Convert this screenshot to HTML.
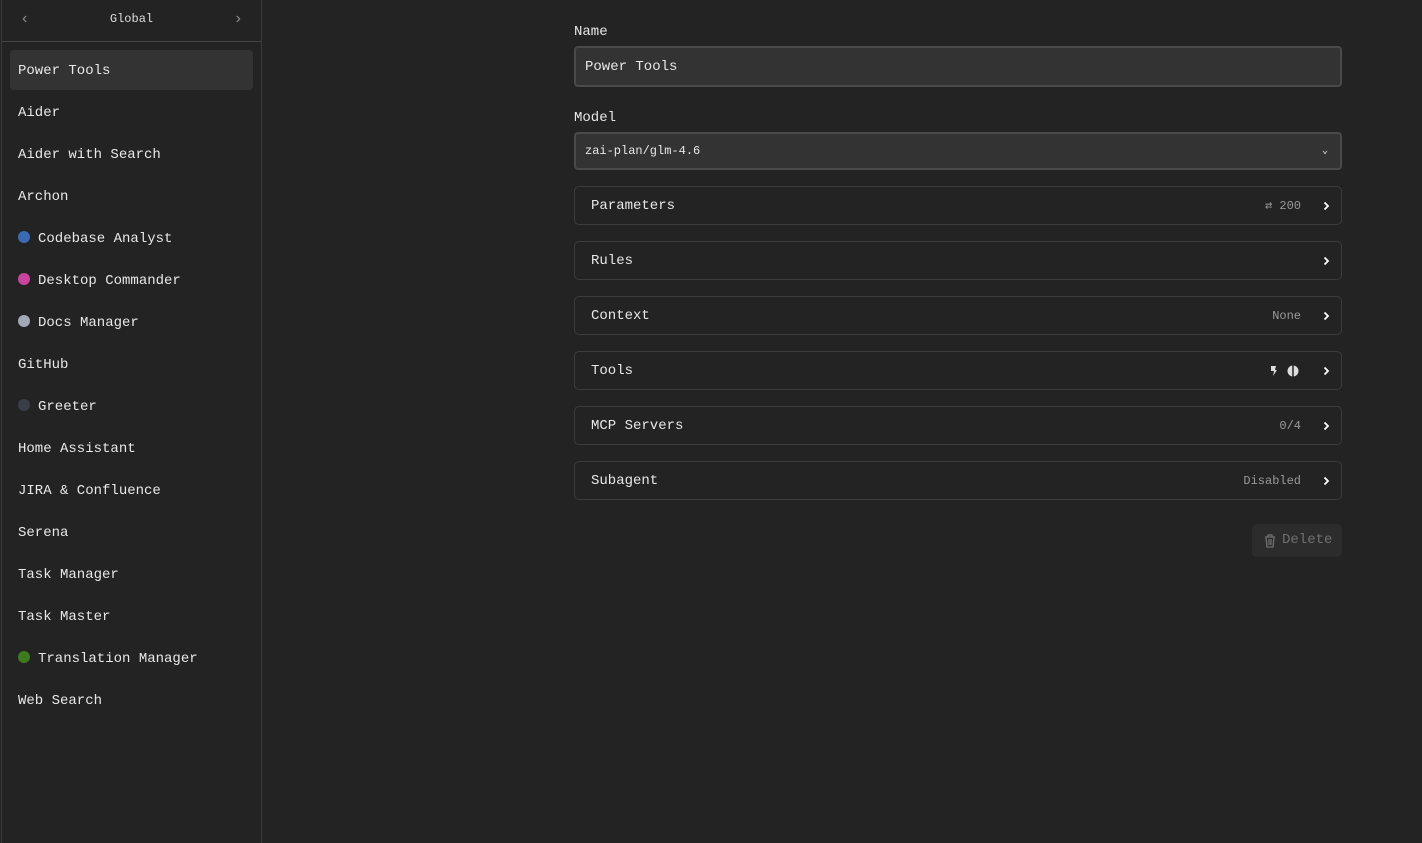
<!DOCTYPE html>
<html><head><style>
*{box-sizing:border-box;margin:0;padding:0}
body{width:1422px;height:843px;background:#232323;color:#e8e8e8;font-family:"Liberation Mono",monospace;font-size:14px;position:relative;overflow:hidden}
.side{position:absolute;left:1px;top:0;width:261px;height:843px;border-left:1px solid #3a3a3a;border-right:1px solid #3a3a3a;background:#232323}
.hdr{height:42px;border-bottom:1px solid #444;position:relative;font-size:12px;text-align:center;line-height:38px;color:#ddd}
.hdr .l,.hdr .r{position:absolute;top:0;color:#888;font-size:16px}
.item{position:absolute;left:8px;width:243px;height:40px;line-height:42px;padding-left:8px;border-radius:4px;white-space:pre}
.item.sel{background:#333}
.dot{display:inline-block;width:12px;height:12px;border-radius:50%;vertical-align:-1px;margin-right:8px}
.lbl{position:absolute;left:574px;font-size:14px}
.inp{position:absolute;left:574px;width:768px;background:#333;border:2px solid #444;border-radius:4px;padding-left:9px;white-space:pre}
.row{position:absolute;left:574px;width:768px;height:39px;border:1px solid #3c3c3c;border-radius:5px;line-height:39px;padding-left:16px}
.row .v{position:absolute;right:40px;top:0;font-size:12px;color:#9a9a9a}
.row svg.c{position:absolute;right:10px;top:13px}
.del{position:absolute;left:1252px;top:524px;width:90px;height:33px;background:#2c2c2c;border-radius:5px;color:#6f6f6f;line-height:33px;padding-left:30px}
</style></head><body>
<div class="side">
<div class="hdr"><span class="l" style="left:18px">‹</span>Global<span class="r" style="right:18px">›</span></div>
<div class="item sel" style="top:50px">Power Tools</div>
<div class="item" style="top:92px">Aider</div>
<div class="item" style="top:134px">Aider with Search</div>
<div class="item" style="top:176px">Archon</div>
<div class="item" style="top:218px"><span class="dot" style="background:#3a6ab4"></span>Codebase Analyst</div>
<div class="item" style="top:260px"><span class="dot" style="background:#c9449c"></span>Desktop Commander</div>
<div class="item" style="top:302px"><span class="dot" style="background:#a3a8b6"></span>Docs Manager</div>
<div class="item" style="top:344px">GitHub</div>
<div class="item" style="top:386px"><span class="dot" style="background:#3a3e47"></span>Greeter</div>
<div class="item" style="top:428px">Home Assistant</div>
<div class="item" style="top:470px">JIRA &amp; Confluence</div>
<div class="item" style="top:512px">Serena</div>
<div class="item" style="top:554px">Task Manager</div>
<div class="item" style="top:596px">Task Master</div>
<div class="item" style="top:638px"><span class="dot" style="background:#3f7a1c"></span>Translation Manager</div>
<div class="item" style="top:680px">Web Search</div>
</div>
<div class="lbl" style="top:24px">Name</div>
<div class="inp" style="top:46px;height:41px;line-height:39px;border-color:#4a4a4a">Power Tools</div>
<div class="lbl" style="top:110px">Model</div>
<div class="inp" style="top:132px;height:38px;line-height:35px;font-size:12px;border-color:#4a4a4a">zai-plan/glm-4.6<span style="position:absolute;right:12px;font-size:10px">⌄</span></div>
<div class="row" style="top:186px">Parameters<span class="v">⇄ 200</span><svg class="c" width="10" height="12" viewBox="0 0 10 12"><path d="M3.5 2.5l3.5 3.5-3.5 3.5" stroke="#fff" stroke-width="1.8" fill="none"/></svg></div>
<div class="row" style="top:241px">Rules<svg class="c" width="10" height="12" viewBox="0 0 10 12"><path d="M3.5 2.5l3.5 3.5-3.5 3.5" stroke="#fff" stroke-width="1.8" fill="none"/></svg></div>
<div class="row" style="top:296px">Context<span class="v">None</span><svg class="c" width="10" height="12" viewBox="0 0 10 12"><path d="M3.5 2.5l3.5 3.5-3.5 3.5" stroke="#fff" stroke-width="1.8" fill="none"/></svg></div>
<div class="row" style="top:351px">Tools<span class="v" style="top:13px;line-height:0"><svg width="34" height="12" viewBox="0 0 34 12"><path d="M4 1h5l-1 4h2l-4 6 1-5H4z" fill="#ddd"/><circle cx="26" cy="6" r="5.5" fill="#ddd"/><path d="M26 0v12" stroke="#232323" stroke-width="1.5"/></svg></span><svg class="c" width="10" height="12" viewBox="0 0 10 12"><path d="M3.5 2.5l3.5 3.5-3.5 3.5" stroke="#fff" stroke-width="1.8" fill="none"/></svg></div>
<div class="row" style="top:406px">MCP Servers<span class="v">0/4</span><svg class="c" width="10" height="12" viewBox="0 0 10 12"><path d="M3.5 2.5l3.5 3.5-3.5 3.5" stroke="#fff" stroke-width="1.8" fill="none"/></svg></div>
<div class="row" style="top:461px">Subagent<span class="v">Disabled</span><svg class="c" width="10" height="12" viewBox="0 0 10 12"><path d="M3.5 2.5l3.5 3.5-3.5 3.5" stroke="#fff" stroke-width="1.8" fill="none"/></svg></div>
<div class="del"><svg style="position:absolute;left:12px;top:10px" width="12" height="14" viewBox="0 0 12 14"><path d="M1 3h10M4 3V1h4v2M2 3l1 10h6l1-10M5 5v6M7 5v6" stroke="#6f6f6f" stroke-width="1.3" fill="none"/></svg>Delete</div>
</body></html>
